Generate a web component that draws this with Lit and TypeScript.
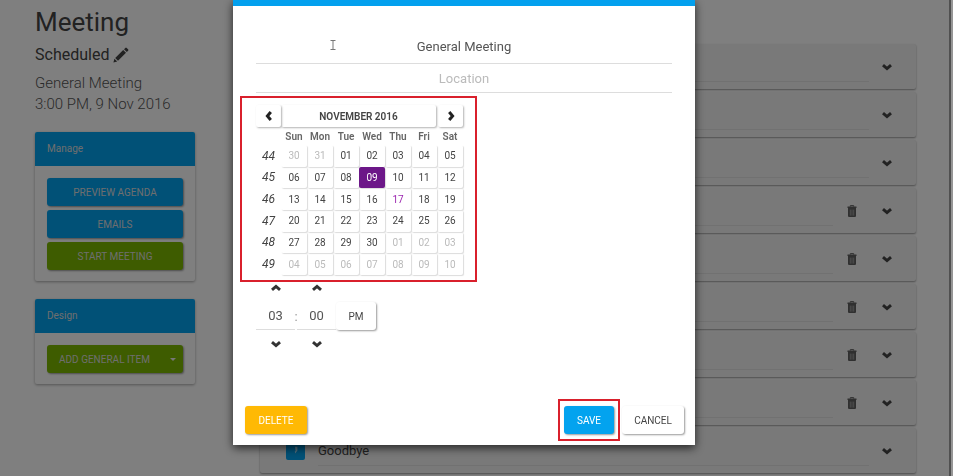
import { LitElement, html, css, svg, nothing } from "lit";
import { customElement, state } from "lit/decorators.js";
import { classMap } from "lit/directives/class-map.js";

const chevron = (dir: "up" | "down" | "left" | "right") => {
  const turn = { down: 0, left: 90, up: 180, right: 270 }[dir];
  return html`<svg class="chevron" width="12" height="12" viewBox="0 0 12 12" aria-hidden="true">
    ${svg`<path transform="rotate(${turn} 6 6)" d="M2 4.2 6 7.6 10 4.2" fill="none" stroke="currentColor" stroke-width="3"/>`}
  </svg>`;
};

const pencil = html`<svg width="16" height="16" viewBox="0 0 16 16" fill="currentColor" aria-hidden="true">
  <path d="M0.4 15.6 1.4 11.8 4.2 14.6Z M2.2 11 10.2 3 13 5.8 5 13.8Z M11 2.2 12.3 0.9Q13 0.2 13.7 0.9L15.1 2.3Q15.8 3 15.1 3.7L13.8 5Z"/>
</svg>`;

const trash = html`<svg width="10" height="12" viewBox="0 0 10 12" aria-hidden="true">
  <path d="M3.3 1.6V0.6H6.7V1.6" fill="none" stroke="currentColor"/>
  <path d="M0.5 1.5H9.5V3H0.5Z M1 3H9V10.8Q9 12 8 12H2Q1 12 1 10.8Z" fill="currentColor"/>
  <path d="M3.3 4.6V10.6M5 4.6V10.6M6.7 4.6V10.6" stroke="#b4b4b4" stroke-width="0.7"/>
</svg>`;

interface AgendaItem {
  title: string;
  removable: boolean;
}

const DAYS = ["Sun", "Mon", "Tue", "Wed", "Thu", "Fri", "Sat"];
const TODAY = 18;

@customElement("app-root")
export class AppRoot extends LitElement {
  @state() private selected = 10;

  private items: AgendaItem[] = [
    { title: "", removable: false },
    { title: "", removable: false },
    { title: "", removable: false },
    { title: "", removable: true },
    { title: "", removable: true },
    { title: "", removable: true },
    { title: "", removable: true },
    { title: "", removable: true },
    { title: "Goodbye", removable: false },
  ];

  static styles = css`
    :host {
      display: block;
      font-family: Roboto, "Liberation Sans", sans-serif;
      color: #444;
    }
    * { box-sizing: border-box; }
    button, input {
      font: inherit;
      color: inherit;
      border: 0;
      margin: 0;
      padding: 0;
      background: none;
    }
    button { cursor: pointer; }
    svg { display: block; flex: none; }

    .page {
      display: flex;
      gap: 65px;
      min-height: 100vh;
      padding: 6px 37px 3px 35px;
      background: #fff;
    }
    .sidebar { width: 160px; flex: none; }
    h1 { margin: 0 0 6px; font-size: 26px; line-height: 32px; font-weight: 400; color: #444; }
    .status {
      display: flex;
      align-items: center;
      gap: 4px;
      margin: 0 0 7px;
      font-size: 16px;
      line-height: 22px;
      color: #444;
    }
    .summary { margin: 0 0 17px; font-size: 15px; line-height: 21px; font-weight: 300; color: #555; }

    .panel {
      margin-bottom: 18px;
      border-radius: 2px;
      box-shadow: 0 1px 3px rgba(0, 0, 0, 0.35);
    }
    .panel h2 {
      margin: 0;
      padding: 0 12px;
      font-size: 10px;
      line-height: 34px;
      font-weight: 400;
      color: #ddd;
      background: #03a3ef;
      border-radius: 2px 2px 0 0;
    }
    .panel-body { display: flex; flex-direction: column; gap: 4px; padding: 12px 12px 11px; }
    .btn {
      height: 28px;
      padding: 0 12px;
      border-radius: 3px;
      font-size: 10px;
      text-align: center;
      color: #fff;
      box-shadow: 1px 1px 2px rgba(0, 0, 0, 0.4);
    }
    .panel .btn { color: #ddd; }
    .blue { background: #03a3ef; }
    .green { background: #7cb800; }
    .amber { background: #ffb904; }
    .plain { background: #fff; color: #444; }
    .split { display: flex; justify-content: space-between; align-items: center; padding: 0 7px 0 12px; }
    .caret { width: 6px; border: 3px solid transparent; border-top-color: #eee; border-bottom: 0; }

    .agenda {
      flex: 1;
      min-width: 0;
      display: flex;
      flex-direction: column;
      gap: 3px;
      margin: 0;
      padding: 38px 0 0;
      list-style: none;
    }
    .item {
      display: flex;
      align-items: center;
      height: 45px;
      padding: 0 23px 0 26px;
      border-radius: 2px;
      background: #f3f3f3;
      box-shadow: 0 1px 2px rgba(0, 0, 0, 0.4);
    }
    .tag {
      display: grid;
      place-items: center;
      width: 19px;
      height: 18px;
      margin-right: 13px;
      border-radius: 2px;
      color: #aaddf8;
      background: #03a3ef;
    }
    .item input {
      flex: 1;
      min-width: 0;
      height: 30px;
      font-size: 13px;
      border-bottom: 1px solid #e2e2e2;
    }
    .item button { margin-left: 12px; }
    .item .remove { margin: 0 12px 0 14px; color: #606060; }

    .overlay {
      position: fixed;
      inset: 0;
      display: flex;
      justify-content: center;
      align-items: flex-start;
      padding-right: 25px;
      background: rgba(0, 0, 0, 0.5);
    }
    .modal {
      width: 462px;
      max-width: 100%;
      position: relative;
      border-top: 6px solid #03a0ee;
      background: #fff;
      box-shadow: 0 3px 9px rgba(0, 0, 0, 0.7);
    }
    .fields { display: flex; flex-direction: column; padding: 24px 23px 3px; }
    .fields input {
      height: 34px;
      font-size: 13px;
      text-align: center;
      color: #555;
      border-bottom: 1px solid #ddd;
    }
    .fields .place { height: 29px; }
    .fields input::placeholder { color: #bbb; opacity: 1; }

    .marked { border: 2px solid #d9202c; }
    .calendar { width: 237px; margin-left: 7px; padding: 7px 12px 5px 14px; }
    .month { display: flex; }
    .month button {
      display: grid;
      place-items: center;
      width: 25px;
      height: 22px;
      color: #222;
      border-radius: 2px;
      box-shadow: 1px 1px 2px rgba(0, 0, 0, 0.3);
    }
    .month .name { flex: 1; margin-right: 2px; font-size: 10px; font-weight: 600; color: #444; }

    table { width: 100%; height: 148px; table-layout: fixed; border-collapse: collapse; font-size: 10px; }
    th, td { padding: 0; text-align: center; }
    .week { width: 25px; }
    thead th { height: 18px; font-weight: 600; color: #666; }
    tbody th { font-size: 12px; font-weight: 400; font-style: italic; color: #444; }
    tbody td { height: 21px; }
    td button {
      display: block;
      width: 100%;
      height: 100%;
      border-radius: 2px;
      color: #444;
      box-shadow: 1px 1px 1px rgba(0, 0, 0, 0.14);
    }
    td .outside { color: #bbb; }
    td .today { color: #9c27b0; }
    td .picked { color: #fff; background: #6c1788; }

    .time {
      display: grid;
      grid-template: 12px 28px 12px / 39px 2px 39px 40px;
      row-gap: 8px;
      place-items: center;
      justify-content: start;
      padding: 0 0 49px 23px;
      color: #333;
    }
    .time input {
      width: 39px;
      height: 28px;
      font-size: 13px;
      text-align: center;
      color: #555;
      border-bottom: 1px solid #ddd;
    }
    .time .hour-down { grid-column: 1; }
    .time .minute { grid-column: 3; }
    .time .btn { width: 40px; padding: 0; }
    .colon { font-size: 13px; color: #999; }

    .actions { display: flex; align-items: center; padding: 0 11px 4px 12px; }
    .actions .btn { padding: 0; width: 62px; }
    .save { margin: 0 2px 0 auto; padding: 5px 4px; }
    .actions .save .btn { display: block; width: 50px; }

    .pointer { position: absolute; left: 97px; top: 34px; }
    .edge {
      position: fixed;
      right: 0;
      top: 0;
      bottom: 0;
      width: 4px;
      border-left: 2px solid #505050;
      background: #969696;
    }
  `;

  private weeks() {
    // The grid opens on Sunday, 30 October 2016.
    const start = Date.UTC(2016, 9, 30);
    return Array.from({ length: 6 }, (_, w) =>
      Array.from({ length: 7 }, (_, d) => {
        const index = w * 7 + d;
        const date = new Date(start + index * 86400000);
        return {
          index,
          label: String(date.getUTCDate()).padStart(2, "0"),
          outside: date.getUTCMonth() !== 10,
        };
      })
    );
  }

  private renderItem(item: AgendaItem) {
    return html`<li class="item">
      <span class="tag">
        <svg width="7" height="9" viewBox="0 0 7 9" aria-hidden="true">
          <path d="M3 0.8H5.4V4.4L3.2 7.6 2.8 5.2H3.6Z" fill="currentColor" />
        </svg>
      </span>
      <input aria-label="Item title" .value=${item.title} />
      ${item.removable ? html`<button class="remove" aria-label="Remove item">${trash}</button>` : nothing}
      <button aria-label="Expand item">${chevron("down")}</button>
    </li>`;
  }

  render() {
    return html`
      <div class="page">
        <aside class="sidebar">
          <h1>Meeting</h1>
          <p class="status">Scheduled ${pencil}</p>
          <p class="summary">General Meeting<br />3:00 PM, 9 Nov 2016</p>
          <section class="panel">
            <h2>Manage</h2>
            <div class="panel-body">
              <button class="btn blue">PREVIEW AGENDA</button>
              <button class="btn blue">EMAILS</button>
              <button class="btn green">START MEETING</button>
            </div>
          </section>
          <section class="panel">
            <h2>Design</h2>
            <div class="panel-body">
              <button class="btn green split">ADD GENERAL ITEM <span class="caret"></span></button>
            </div>
          </section>
        </aside>
        <ul class="agenda">
          ${this.items.map((item) => this.renderItem(item))}
        </ul>
      </div>

      <div class="overlay">
        <div class="modal" role="dialog" aria-label="Edit meeting">
          <svg class="pointer" width="6" height="10" viewBox="0 0 6 10" aria-hidden="true">
            <path d="M0.5 0.5H5.5M3 0.5V9.5M0.5 9.5H5.5" fill="none" stroke="#777" />
          </svg>
          <div class="fields">
            <input aria-label="Meeting name" .value=${"General Meeting"} />
            <input class="place" aria-label="Location" placeholder="Location" />
          </div>

          <div class="calendar marked">
            <div class="month">
              <button aria-label="Previous month">${chevron("left")}</button>
              <button class="name">NOVEMBER 2016</button>
              <button aria-label="Next month">${chevron("right")}</button>
            </div>
            <table>
              <thead>
                <tr>
                  <th class="week"></th>
                  ${DAYS.map((d) => html`<th scope="col">${d}</th>`)}
                </tr>
              </thead>
              <tbody>
                ${this.weeks().map(
                  (week, w) => html`<tr>
                    <th scope="row">${44 + w}</th>
                    ${week.map(
                      (day) => html`<td>
                        <button
                          class=${classMap({
                            outside: day.outside,
                            today: day.index === TODAY,
                            picked: day.index === this.selected,
                          })}
                          @click=${() => (this.selected = day.index)}
                        >${day.label}</button>
                      </td>`
                    )}
                  </tr>`
                )}
              </tbody>
            </table>
          </div>

          <div class="time">
            <button aria-label="Hour up">${chevron("up")}</button>
            <button class="minute" aria-label="Minute up">${chevron("up")}</button>
            <span></span>
            <input aria-label="Hour" .value=${"03"} />
            <span class="colon">:</span>
            <input aria-label="Minute" .value=${"00"} />
            <button class="btn plain">PM</button>
            <button class="hour-down" aria-label="Hour down">${chevron("down")}</button>
            <button class="minute" aria-label="Minute down">${chevron("down")}</button>
          </div>

          <div class="actions">
            <button class="btn amber">DELETE</button>
            <div class="save marked"><button class="btn blue">SAVE</button></div>
            <button class="btn plain">CANCEL</button>
          </div>
        </div>
      </div>
      <div class="edge"></div>
    `;
  }
}
